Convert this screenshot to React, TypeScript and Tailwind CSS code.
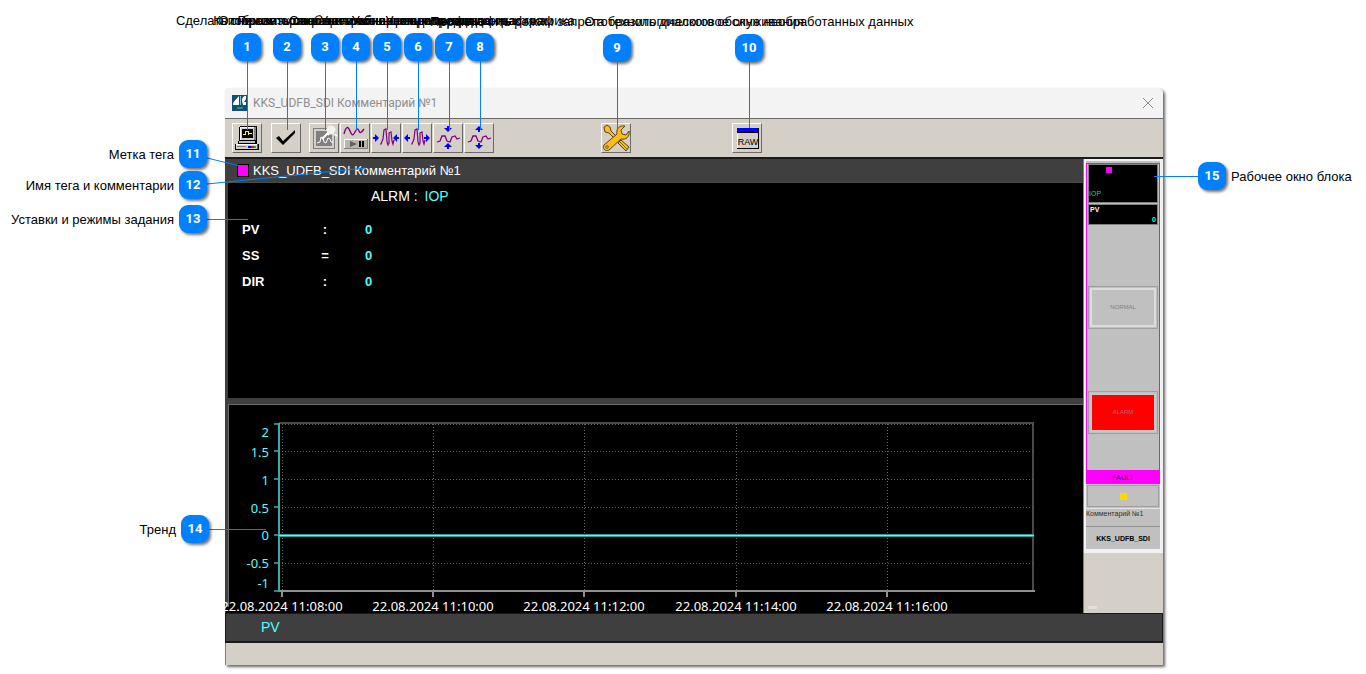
import type { ReactNode } from 'react';

const CYAN = '#4fffff';

const topCallouts = [
  { n: 1, pos: 'left-[247px] top-[13px]', line: 'h-[69px]', text: 'Сделать снимок экрана' },
  { n: 2, pos: 'left-[287px] top-[13px]', line: 'h-[69px]', text: 'Квитировать сообщения' },
  { n: 3, pos: 'left-[325px] top-[13px]', line: 'h-[69px]', text: 'Отобразить окно настройки тренда' },
  { n: 4, pos: 'left-[356px] top-[13px]', line: 'h-[69px]', text: 'Режим остановки и обновления тренда' },
  { n: 5, pos: 'left-[387px] top-[13px]', line: 'h-[69px]', text: 'Сократить ось времени графика' },
  { n: 6, pos: 'left-[418px] top-[13px]', line: 'h-[69px]', text: 'Увеличить ось времени графика' },
  { n: 7, pos: 'left-[449px] top-[13px]', line: 'h-[69px]', text: 'Уменьшить ось данных графика' },
  { n: 8, pos: 'left-[480px] top-[13px]', line: 'h-[69px]', text: 'Увеличить ось данных графика' },
  { n: 9, pos: 'left-[617px] top-[14px]', line: 'h-[69px]', text: 'Переключить режим запрета технологического обслуживания' },
  { n: 10, pos: 'left-[749px] top-[14px]', line: 'h-[66px]', text: 'Отобразить диалоговое окно необработанных данных' },
];

const leftCallouts = [
  { n: 11, pos: 'top-[140px] w-[207px]', text: 'Метка тега' },
  { n: 12, pos: 'top-[171px] w-[207px]', text: 'Имя тега и комментарии' },
  { n: 13, pos: 'top-[205px] w-[207px]', text: 'Уставки и режимы задания' },
  { n: 14, pos: 'top-[515px] w-[209px]', text: 'Тренд' },
];

const params = [
  { name: 'PV', sign: ':', value: '0' },
  { name: 'SS', sign: '=', value: '0' },
  { name: 'DIR', sign: ':', value: '0' },
];

function Badge({ n }: { n: number }) {
  return (
    <span className="flex size-7 shrink-0 items-center justify-center rounded-[9px] bg-[#0080ff] font-['Roboto',sans-serif] text-[13px] font-bold text-white shadow-[2px_2px_3px_rgba(0,0,0,0.55)]">
      {n}
    </span>
  );
}

function ToolButton({ label, children }: { label: string; children: ReactNode }) {
  return (
    <button
      type="button"
      aria-label={label}
      className="size-[30px] shrink-0 border border-t-white border-r-[#6b6965] border-b-[#6b6965] border-l-white bg-[#d4d0c8]"
    >
      <svg viewBox="0 0 28 28" className="block size-7" fill="none">
        {children}
      </svg>
    </button>
  );
}

function ComputerIcon() {
  return (
    <g shapeRendering="crispEdges">
      <path d="M7 2h16l1 1v14H6V3z" fill="#000" />
      <path d="M7 3h14v13H7z" fill="#d4d0c8" />
      <path d="M7 3h14v1H7zM7 3h1v13H7z" fill="#fff" />
      <path d="M21 3h2v13h-2z" fill="#808080" />
      <path d="M9 5h11v9H9z" fill="#000" />
      <path d="M10 10h2v1h-2zM12 7h1v4h-1zM13 7h3v1h-3zM15 8h1v3h-1zM16 9h3v1h-3z" fill="#ffff00" />
      <path d="M5 17h19v3h2v6H2v-6h3z" fill="#000" />
      <path d="M6 17h16v2H6z" fill="#c0c0c0" />
      <path d="M3 20h21v5H3z" fill="#d4d0c8" />
      <path d="M3 20h21v1H3z" fill="#fff" />
      <path d="M24 20h1v5h-1z" fill="#606060" />
      <path d="M4 22h9v1H4z" fill="#808080" />
      <path d="M15 22h3v2h-3z" fill="#00f" />
      <path d="M18 22h3v2h-3z" fill="#f00" />
      <path d="M21 22h2v2h-2z" fill="#0c0" />
    </g>
  );
}

function PictureIcon() {
  return (
    <>
      <g shapeRendering="crispEdges">
        <path d="M3 4h22v21H3z" fill="#808080" />
        <path d="M4 5h20v19H4z" fill="#d4d0c8" />
        <path d="M6 7h16v15H6z" fill="#808080" />
      </g>
      <path d="M7 19l3-1 1-5 2 1 1 4 2 1 2-5 2 1 1 3 2 0" stroke="#fff" />
      <path d="M18 9l-6 6" stroke="#fff" strokeWidth="2" />
      <circle cx="21" cy="6" r="4.5" fill="#f4f2ee" />
      <path d="M17 9l2 2M24 10l3 2" stroke="#fff" strokeWidth="2" />
    </>
  );
}

function PauseIcon() {
  return (
    <>
      <path d="M3 10c2-8 4-8 6-3s3 5 5 1 3-4 4-1 3 1 5-2" stroke="#800080" strokeWidth="1.4" />
      <g shapeRendering="crispEdges">
        <path d="M3 15h24v10H3z" fill="#808080" />
        <path d="M3 15h23v9H3z" fill="#fff" />
        <path d="M4 16h22v8H4z" fill="#b8b5ae" />
        <path d="M18 17h2v6h-2zM21 17h2v6h-2z" fill="#000" />
      </g>
      <path d="M9 17l7 3-7 3z" fill="#606060" />
    </>
  );
}

function SpikeWave() {
  return (
    <path
      d="M8 20h1l2-5 1-9 2-1 1 13 1 3 1-2 0-10 2-1 1 9 1 3 1-4"
      stroke="#800080"
      strokeWidth="1.2"
    />
  );
}

function FlatWave() {
  return <path d="M3 18l3-1 2-5 3 0 2 5 3 1 2-5 3-1 2 3 3-1" stroke="#800080" strokeWidth="1.3" />;
}

function NarrowXIcon() {
  return (
    <>
      <SpikeWave />
      <path d="M1 13h2v-3l4 4-4 4v-3H1zM27 13h-2v-3l-4 4 4 4v-3h2z" fill="#00f" />
    </>
  );
}

function WideXIcon() {
  return (
    <>
      <SpikeWave />
      <path d="M7 13H5v-3l-4 4 4 4v-3h2zM21 13h2v-3l4 4-4 4v-3h-2z" fill="#00f" />
    </>
  );
}

function NarrowYIcon() {
  return (
    <>
      <FlatWave />
      <path d="M13 2v2h-3l4 4 4-4h-3V2zM13 25v-2h-3l4-4 4 4h-3v2z" fill="#00f" />
    </>
  );
}

function WideYIcon() {
  return (
    <>
      <FlatWave />
      <path d="M13 8V6h-3l4-4 4 4h-3v2zM13 19v2h-3l4 4 4-4h-3v-2z" fill="#00f" />
    </>
  );
}

function ToolsIcon() {
  return (
    <g stroke="#5b4510" strokeLinejoin="round">
      <path d="M2 3l3-2 3 2 1 4 5 5-2 2-5-5-4-1z" fill="#fdbb1c" />
      <path d="M16 19l3-3 8 7-3 4z" fill="#fdbb1c" />
      <path d="M18 18l7 7" strokeWidth="0.8" />
      <path
        d="M2 21L15 10c-1-5 2-9 8-8l-4 4 1 4 4 1 3-4c1 6-3 9-8 8L7 26c-4 2-7-2-5-5z"
        fill="#fdbb1c"
      />
      <circle cx="5" cy="23" r="1.3" fill="#d4d0c8" strokeWidth="0.8" />
    </g>
  );
}

function RawIcon() {
  return (
    <>
      <g shapeRendering="crispEdges">
        <path d="M4 4h22v21H4z" fill="#000" />
        <path d="M4 4h21v20H4z" fill="#fff" />
        <path d="M5 5h20v19H5z" fill="#d4d0c8" />
        <path d="M4 4h21v4H4z" fill="#00f" />
        <path d="M4 8h21v1H4z" fill="#000" />
      </g>
      <text x="15" y="21" textAnchor="middle" fontSize="9" fill="#000" fontFamily="Liberation Sans, sans-serif">
        RAW
      </text>
    </>
  );
}

function TitleBar() {
  return (
    <div className="flex h-[31px] items-center border-b border-[#6b6965] bg-[#f3f3f3] pr-2 pl-[7px]">
      <svg viewBox="0 0 16 16" className="size-4 shrink-0" fill="none">
        <path d="M0 0h16v16H0z" fill="#0d5270" />
        <path d="M7 1v9H1c0-4 3-5 6-9z" fill="#fff" />
        <path d="M8 1h1v9H8z" fill="#7fc4dd" />
        <path d="M10 6c0-3 1-5 4-5v3l-2 3h2v3h-3z" fill="#fff" />
        <path d="M5 13h6" stroke="#7fa9ba" />
      </svg>
      <h1 className="ml-[5px] flex-1 font-['Roboto','Noto_Sans',sans-serif] text-[12px] text-[#8f8f8f]">
        KKS_UDFB_SDI Комментарий №1
      </h1>
      <button type="button" aria-label="Закрыть" className="p-px">
        <svg viewBox="0 0 12 12" className="size-3" fill="none" stroke="#8a8a8a">
          <path d="M1 1l10 10M11 1L1 11" />
        </svg>
      </button>
    </div>
  );
}

function Toolbar() {
  return (
    <div className="flex h-10 items-center border-b-2 border-[#1b1b1b] bg-[#d4d0c8] pl-[7px]">
      <div className="flex gap-[9px]">
        <ToolButton label={topCallouts[0].text}><ComputerIcon /></ToolButton>
        <ToolButton label={topCallouts[1].text}>
          <path d="M4 14l3-2 4 5L23 6v3L11 21z" fill="#000" />
        </ToolButton>
      </div>
      <div className="ml-2 flex gap-px">
        <ToolButton label={topCallouts[2].text}><PictureIcon /></ToolButton>
        <ToolButton label={topCallouts[3].text}><PauseIcon /></ToolButton>
        <ToolButton label={topCallouts[4].text}><NarrowXIcon /></ToolButton>
        <ToolButton label={topCallouts[5].text}><WideXIcon /></ToolButton>
        <ToolButton label={topCallouts[6].text}><NarrowYIcon /></ToolButton>
        <ToolButton label={topCallouts[7].text}><WideYIcon /></ToolButton>
      </div>
      <div className="ml-[107px] flex gap-[101px]">
        <ToolButton label={topCallouts[8].text}><ToolsIcon /></ToolButton>
        <ToolButton label={topCallouts[9].text}><RawIcon /></ToolButton>
      </div>
    </div>
  );
}

function Details() {
  return (
    <section className="border-l-2 border-[#3f3f3f] bg-black pb-[103px]">
      <div className="flex h-6 items-center gap-1 border-b border-[#4a4a4a] bg-[#3f3f3f] pl-[9px]">
        <span className="h-[13px] w-3 border border-black bg-[#ff00ff]" />
        <h2 className="text-[13px] leading-5 text-white">KKS_UDFB_SDI Комментарий №1</h2>
      </div>
      <p className="pt-[3px] pl-[143px] text-[14px] leading-5 text-white">
        ALRM : <span className="ml-[3px] text-[#4fffff]">IOP</span>
      </p>
      <table className="mt-[11px] ml-[14px] text-left text-[13px] font-bold text-white">
        <tbody>
          {params.map((p) => (
            <tr key={p.name} className="h-[26px]">
              <th scope="row" className="w-[78px] p-0">{p.name}</th>
              <td className="w-[10px] p-0 text-center">{p.sign}</td>
              <td className="p-0 pl-[35px] text-[#4fffff]">{p.value}</td>
            </tr>
          ))}
        </tbody>
      </table>
    </section>
  );
}

const yTicks = [20, 47, 75, 103, 131, 159, 187];
const yLabels = [
  { y: 33, text: '2' },
  { y: 53, text: '1.5' },
  { y: 81, text: '1' },
  { y: 109, text: '0.5' },
  { y: 136, text: '0' },
  { y: 164, text: '-0.5' },
  { y: 184, text: '-1' },
];
const xTicks = [
  { x: 56, text: '22.08.2024 11:08:00' },
  { x: 207, text: '22.08.2024 11:10:00' },
  { x: 358, text: '22.08.2024 11:12:00' },
  { x: 510, text: '22.08.2024 11:14:00' },
  { x: 661, text: '22.08.2024 11:16:00' },
];

function Trend() {
  return (
    <section className="border-t-[6px] border-[#3f3f3f] bg-black">
      <svg
        viewBox="0 0 857 209"
        className="block w-full overflow-visible"
        fontFamily="Noto Sans, sans-serif"
        fontSize="13"
        shapeRendering="crispEdges"
      >
        <path d="M0 0h3v203H0z" fill="#3f3f3f" />
        <path d="M2 0h855v1H2zM2 0h1v203H2z" fill="#6a6a6a" />
        <path d="M53 18h755v2H53zM806 19h2v168h-2z" fill="#4a4a4a" />
        {yTicks.map((y) => (
          <g key={y}>
            <path d={`M56 ${y}.5H808`} stroke="#666" strokeDasharray="1 2" />
            <path d={`M48 ${y - 1}h6v2H48z`} fill="#2a8585" />
          </g>
        ))}
        {xTicks.map((t) => (
          <g key={t.x}>
            <path d={`M${t.x}.5 20V187`} stroke="#666" strokeDasharray="1 2" />
            <path d={`M${t.x - 1} 187h2v6h-2z`} fill="#909090" />
            <text x={t.x} y="207" textAnchor="middle" fill="#fff">{t.text}</text>
          </g>
        ))}
        <path d="M53 186h756v2H53z" fill="#909090" />
        <path d="M52 19h2v169h-2z" fill="#3aa9a9" />
        <path d="M53 130h755v3H53z" fill="#2f9c9c" />
        <path d="M53 131h755v1H53z" fill={CYAN} />
        {yLabels.map((l) => (
          <text key={l.text} x="43" y={l.y} textAnchor="end" fill={CYAN}>{l.text}</text>
        ))}
      </svg>
    </section>
  );
}

function Faceplate() {
  return (
    <aside className="flex w-20 shrink-0 flex-col border-l border-[#808080] bg-[#d4d0c8]">
      <div className="border-2 border-r-[3px] border-b-4 border-[#f2f2f2] bg-[#c0c0c0] pt-[2px]">
        <div className="border border-b-0 border-[#ff00ff] p-px pt-0">
          <div className="flex h-[39px] flex-col justify-between border border-[#808080] bg-black pb-[4px]">
            <span className="mt-[2px] ml-[17px] size-[6px] bg-[#ff00ff]" />
            <span className="text-[7px] leading-[9px] text-[#00d0b0]">IOP</span>
          </div>
          <div className="mt-px flex h-[21px] flex-col justify-between border border-[#808080] bg-black px-px text-[7px] leading-[9px] font-bold">
            <span className="text-white">PV</span>
            <span className="text-right text-[#40ffc0]">0</span>
          </div>
          <button
            type="button"
            className="mt-[61px] block h-[43px] w-full border border-[#a0a0a0] p-px text-[6px] text-[#808080]"
          >
            <span className="flex h-full items-center justify-center border-2 border-[#dcdcdc]">NORMAL</span>
          </button>
          <button
            type="button"
            className="mt-[62px] mb-[35px] block h-[43px] w-full border border-[#a0a0a0] p-px text-[6px] text-[#a07070]"
          >
            <span className="flex h-full items-center justify-center border-2 border-[#c8c8c8] bg-[#ff0000]">ALARM</span>
          </button>
        </div>
        <div className="h-[14px] bg-[#ff00ff] text-center text-[7px] leading-[15px] text-[#50004a]">FAULT</div>
        <div className="mx-px mt-px flex h-[22px] items-center justify-center border border-[#a0a0a0]">
          <span className="size-[7px] bg-[#ffd800]" />
        </div>
        <div className="mt-px h-[19px] border-t border-b border-t-[#e4e4e4] border-b-[#909090] text-[7px] leading-[9px] text-[#303030]">
          Комментарий №1
        </div>
        <div className="h-[22px] text-center text-[7px] leading-[23px] font-bold text-black">KKS_UDFB_SDI</div>
      </div>
      <span className="mt-auto mb-1 ml-1 h-[3px] w-[9px] bg-[#e2e0da]" />
    </aside>
  );
}

function BlockWindow() {
  return (
    <main className="overflow-hidden rounded-t-[5px] bg-[#d4d0c8] shadow-[2px_2px_3px_rgba(0,0,0,0.6)]">
      <TitleBar />
      <Toolbar />
      <div className="flex border-l border-[#3f3f3f]">
        <div className="min-w-0 flex-1">
          <Details />
          <Trend />
        </div>
        <Faceplate />
      </div>
      <div className="h-[30px] border border-b-2 border-[#1b1b1b] bg-[#3f3f3f] pl-[35px] text-[14px] leading-[26px] text-[#4fffff]">
        PV
      </div>
      <div className="h-[22px] border-l border-[#808080]" />
    </main>
  );
}

export default function App() {
  return (
    <div className="relative overflow-hidden bg-white pt-[88px] pr-[203px] pb-[9px] pl-[225px] font-['Liberation_Sans',Arial,sans-serif]">
      <BlockWindow />

      {topCallouts.map((c) => (
        <div
          key={c.n}
          className={`pointer-events-none absolute flex w-0 flex-col items-center text-[13px] leading-4 whitespace-nowrap text-black ${c.pos}`}
        >
          <span className="mb-1">{c.text}</span>
          <Badge n={c.n} />
          <span className={`w-px bg-[#0080ff] ${c.line}`} />
        </div>
      ))}

      <svg className="pointer-events-none absolute inset-0 size-full" stroke="#0080ff" fill="none">
        <path d="M207 158L240 166" />
        <path d="M207 184L366 168" />
        <path d="M207 219.5H248" />
        <path d="M209 529.5H266" />
      </svg>
      {leftCallouts.map((c) => (
        <div
          key={c.n}
          className={`pointer-events-none absolute left-0 flex items-center justify-end gap-[5px] text-[13px] text-black ${c.pos}`}
        >
          <span className="pt-px">{c.text}</span>
          <Badge n={c.n} />
        </div>
      ))}

      <div className="pointer-events-none absolute top-[162px] right-0 flex w-[212px] items-center text-[13px] whitespace-nowrap text-black">
        <span className="h-px w-11 bg-[#0080ff]" />
        <Badge n={15} />
        <span className="ml-[5px] pt-px">Рабочее окно блока</span>
      </div>
    </div>
  );
}
